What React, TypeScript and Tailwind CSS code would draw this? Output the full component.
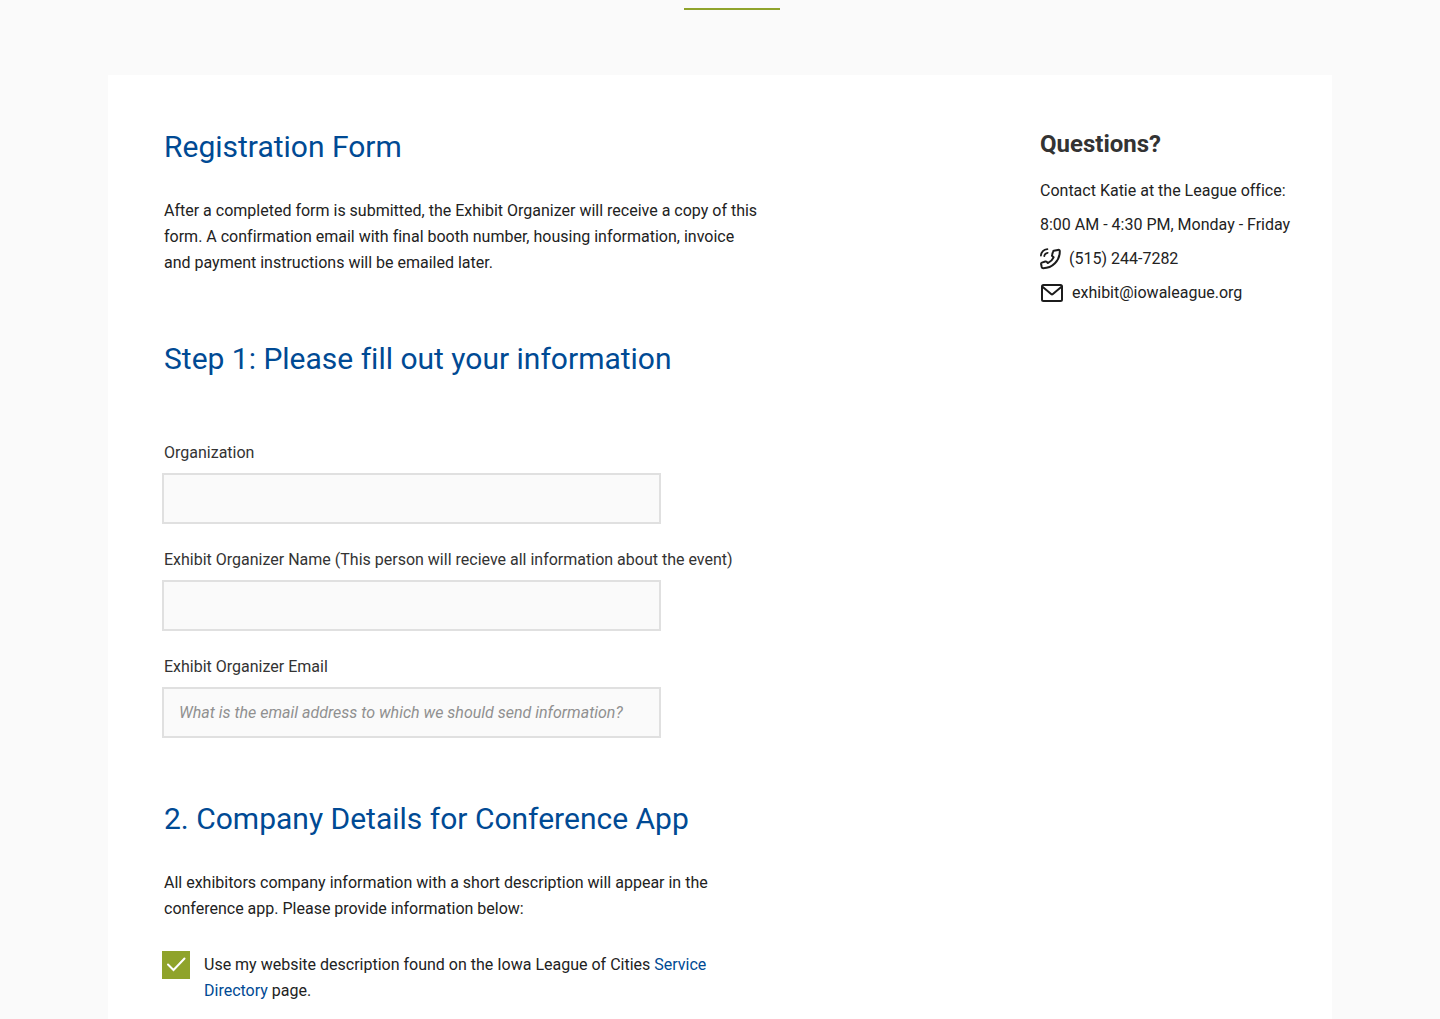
import { useState } from "react";

function Phone() {
  return (
    <svg width="21" height="22" viewBox="0 0 21 22" fill="none" stroke="#1c1c1c" strokeWidth="2" strokeLinecap="round" strokeLinejoin="round" aria-hidden="true">
      <path d="M13.800 2.800 18 1.900c1-.2 1.800.4 1.800 1.400C19.800 12.800 12.400 20.200 3.200 20.200c-.8 0-1.300-.4-1.500-1.200l-.6-3c-.1-.7.2-1.200.8-1.400l3.400-1.100c.6-.2 1.100 0 1.500.4l1 1.200c2.600-1.200 4.700-3.300 5.800-5.800l-1.100-1c-.5-.4-.6-.9-.4-1.500l1-3.300c.1-.4.300-.6.700-.7z" />
      <path strokeWidth="1.800" d="M.9 7.600C1.300 4.100 3.800 1.500 7.400 1.100M4.300 8.200c.2-1.900 1.500-3.200 3.400-3.400" />
    </svg>
  );
}

function Mail() {
  return (
    <svg width="24" height="20" viewBox="0 0 24 20" fill="none" stroke="#1c1c1c" strokeWidth="2" strokeLinecap="round" strokeLinejoin="round" aria-hidden="true">
      <rect x="2" y="2" width="20" height="16" rx="1.500" />
      <path d="M2.500 3.800l8.600 7.200c.5.4 1.300.4 1.800 0l8.600-7.200" />
    </svg>
  );
}

function Field({ id, label, type = "text", placeholder }: { id: string; label: string; type?: string; placeholder?: string }) {
  return (
    <div>
      <label htmlFor={id} className="block leading-6 text-[#333]">{label}</label>
      <input
        id={id}
        type={type}
        placeholder={placeholder}
        className="-ml-0.5 mt-2 block h-[51px] w-full max-w-[499px] border-2 border-[#e0e0e0] bg-[#fafafa] px-[15px] outline-none placeholder:italic placeholder:text-[#909090]"
      />
    </div>
  );
}

const heading = "text-3xl leading-10 text-[#004a94]";

export default function App() {
  const [checked, setChecked] = useState(true);
  return (
    <div className="min-h-screen bg-[#fafafa] font-['Roboto',sans-serif] text-base text-[#222] [font-variant-ligatures:none]">
      <div className="mx-[108px] flex h-[75px] justify-center pt-2 pl-6">
        <div className="h-0.5 w-24 bg-[#8fa32b]" />
      </div>
      <main className="mx-[108px] flex min-h-[944px] items-start justify-between bg-white px-14 pt-[51px] pb-4">
        <form className="w-full max-w-[598px] pt-px">
          <h1 className={heading}>Registration Form</h1>
          <p className="mt-[31px] leading-[26px]">After a completed form is submitted, the Exhibit Organizer will receive a copy of this form. A confirmation email with final booth number, housing information, invoice and payment instructions will be emailed later.</p>
          <h2 className={heading + " mt-[63px]"}>Step 1: Please fill out your information</h2>
          <div className="mt-[62px] flex flex-col gap-6">
            <Field id="organization" label="Organization" />
            <Field id="name" label="Exhibit Organizer Name (This person will recieve all information about the event)" />
            <Field id="email" type="email" label="Exhibit Organizer Email" placeholder="What is the email address to which we should send information?" />
          </div>
          <h2 className={heading + " mt-[61px]"}>2. Company Details for Conference App</h2>
          <p className="mt-[31px] max-w-[560px] leading-[26px]">All exhibitors company information with a short description will appear in the conference app. Please provide information below:</p>
          <div className="mt-[29px] flex max-w-[560px] items-start gap-3.5">
            <span className="-ml-0.5 grid shrink-0">
              <input id="directory" type="checkbox" checked={checked} onChange={(e) => setChecked(e.target.checked)} className="peer col-start-1 row-start-1 size-7 appearance-none border border-[#8fa32b] bg-white checked:bg-[#8fa32b]" />
              <svg className="pointer-events-none invisible col-start-1 row-start-1 size-7 peer-checked:visible" viewBox="0 0 28 28" fill="none" stroke="white" strokeWidth="2" strokeLinecap="round" aria-hidden="true">
                <path d="M6 13.500l5.500 5.500L22.500 7.500" />
              </svg>
            </span>
            <label htmlFor="directory" className="pt-px leading-[26px]">Use my website description found on the Iowa League of Cities <a href="#directory" className="text-[#004a94]">Service Directory</a> page.</label>
          </div>
        </form>
        <aside className="-mr-1 w-[240px] shrink-0 whitespace-nowrap">
          <h2 className="text-2xl leading-9 font-bold text-[#333]">Questions?</h2>
          <p className="mt-3 leading-[34px]">Contact Katie at the League office:</p>
          <p className="leading-[34px]">8:00 AM - 4:30 PM, Monday - Friday</p>
          <p className="flex items-center gap-2 leading-[34px]"><Phone />(515) 244-7282</p>
          <p className="flex items-center gap-2 leading-[34px]"><Mail />exhibit@iowaleague.org</p>
        </aside>
      </main>
    </div>
  );
}
